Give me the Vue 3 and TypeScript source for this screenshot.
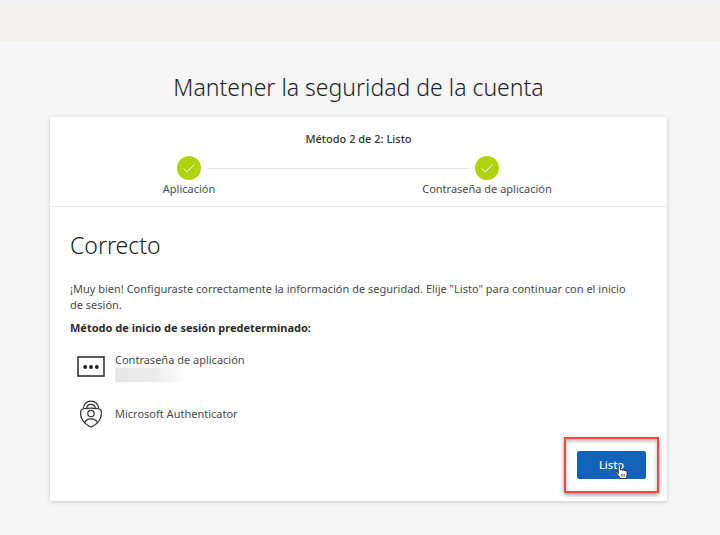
<script setup lang="ts">
interface Step {
  id: string
  label: string
}

interface Method {
  id: 'password' | 'authenticator'
  label: string
  masked: boolean
}

const steps: Step[] = [
  { id: 'app', label: 'Aplicación' },
  { id: 'app-password', label: 'Contraseña de aplicación' },
]

const methods: Method[] = [
  { id: 'password', label: 'Contraseña de aplicación', masked: true },
  { id: 'authenticator', label: 'Microsoft Authenticator', masked: false },
]
</script>

<template>
  <div class="page">
    <header class="topbar"></header>
    <main class="content">
      <h1 class="title">Mantener la seguridad de la cuenta</h1>
      <section class="card">
        <div class="progress">
          <p class="progress-title">Método 2 de 2: Listo</p>
          <ol class="steps">
            <li v-for="step in steps" :key="step.id" class="step">
              <svg class="check" viewBox="0 0 24 24" aria-hidden="true">
                <circle cx="12" cy="12" r="12" fill="#b0d40b" />
                <path d="M6.500 12.300l3.600 3.600 7.400-7.400" fill="none" stroke="#fff" stroke-width="1" />
              </svg>
              <span class="step-label">{{ step.label }}</span>
            </li>
          </ol>
        </div>
        <div class="body">
          <h2 class="heading">Correcto</h2>
          <p class="message">
            ¡Muy bien! Configuraste correctamente la información de seguridad. Elije "Listo" para continuar con el inicio de sesión.
          </p>
          <p class="default-method">Método de inicio de sesión predeterminado:</p>
          <ul class="methods">
            <li v-for="method in methods" :key="method.id" class="method">
              <svg v-if="method.id === 'password'" class="icon" viewBox="0 0 28 28" aria-hidden="true">
                <rect x="1" y="4" width="26" height="19" fill="none" stroke="#333" stroke-width="1.600" />
                <circle cx="8.200" cy="14" r="1.900" fill="#222" />
                <circle cx="14" cy="14" r="1.900" fill="#222" />
                <circle cx="19.800" cy="14" r="1.900" fill="#222" />
              </svg>
              <svg v-else class="icon" viewBox="0 0 28 28" aria-hidden="true">
                <g fill="none" stroke="#333" stroke-width="1.200">
                  <path d="M6.300 8.500C7 3.900 9.900 1.100 14 1.100s7 2.800 7.700 7.400" />
                  <path d="M9.600 8.200C9.900 5.800 11.400 4.300 14 4.300s4.100 1.500 4.400 3.900" />
                  <path d="M3.800 10.500C4.600 8.700 6.500 8.200 14 8.200s9.400.5 10.200 2.300C25.400 17.500 21.500 24 14 27 6.500 24 2.600 17.500 3.800 10.500z" />
                  <circle cx="14" cy="13.500" r="3.200" />
                  <path d="M7.300 23.100C8.200 20.400 10.700 18.800 14 18.800s5.800 1.600 6.700 4.300" />
                </g>
              </svg>
              <div class="method-text">
                <span>{{ method.label }}</span>
                <span v-if="method.masked" class="mask"></span>
              </div>
            </li>
          </ul>
          <div class="actions">
            <div class="highlight">
              <button type="button" class="done">Listo</button>
              <svg class="cursor" viewBox="0 0 14 16" aria-hidden="true">
                <path
                  d="M3.300 9.800V2.200c0-1.700 2.200-1.700 2.200 0v4c.3-.9 2-.8 2.200.3.500-.8 2-.6 2.200.5.700-.7 2.200-.3 2.200 1v3c0 1.200-1 2-1 3.500H5.200C4.800 12.800 2.900 11.600 1.300 9.300.4 7.900 2 7.200 2.800 8.100z"
                  fill="#fff" stroke="#222" stroke-width=".9" stroke-linejoin="round"
                />
                <path d="M6.300 10v2.800M8 10v2.800M9.700 10v2.800" stroke="#333" stroke-width=".7" />
              </svg>
            </div>
          </div>
        </div>
      </section>
    </main>
  </div>
</template>

<style>
body {
  background: #f6f6f6;
}
</style>

<style scoped>
.page {
  min-height: 100vh;
  background: #f6f6f6;
  color: #4a4a4a;
  font-family: "Noto Sans", "Open Sans", sans-serif;
  font-size: 11px;
  line-height: 16px;
}

h1, h2, p, ol, ul {
  margin: 0;
  padding: 0;
  font-weight: 400;
}

ol, ul {
  list-style: none;
}

.topbar {
  height: 41px;
  background: linear-gradient(#eff0f0 4px, #f1f0ee 6px);
}

.content {
  padding: 30px 53px 34px 50px;
}

.title {
  color: #222;
  font-size: 23px;
  font-weight: 350;
  line-height: 32px;
  text-align: center;
}

.card {
  margin-top: 14px;
  background: #fff;
  border-radius: 2px;
  box-shadow: 0 1px 4px rgba(0, 0, 0, 0.18);
}

.progress {
  padding: 14px 0 9px;
  border-bottom: 1px solid #ececec;
}

.progress-title {
  color: #333;
  font-weight: 500;
  text-align: center;
}

.steps {
  display: flex;
  justify-content: space-between;
  margin: 9px 168px 0 127px;
  background: linear-gradient(#e4e4e4, #e4e4e4) center 12px / calc(100% - 60px) 1px no-repeat;
}

.step {
  display: flex;
  flex-direction: column;
  align-items: center;
  width: 24px;
  gap: 1px;
  white-space: nowrap;
}

.check {
  flex: none;
  width: 24px;
  height: 24px;
}

.body {
  padding: 22px 8px 8px 20px;
}

.heading {
  color: #222;
  font-size: 23px;
  font-weight: 300;
  line-height: 32px;
}

.message {
  margin: 20px 20px 0 0;
  padding-right: 8px;
}

.default-method {
  margin-top: 7px;
  color: #2b2b2b;
  font-weight: 700;
}

.methods {
  display: flex;
  flex-direction: column;
  gap: 18px;
  margin: 16px 0 0 7px;
}

.method {
  display: flex;
  align-items: center;
  gap: 10px;
}

.icon {
  flex: none;
  width: 28px;
  height: 28px;
}

.method-text {
  display: flex;
  flex-direction: column;
}

.mask {
  width: 72px;
  height: 14px;
  background: linear-gradient(90deg, #e7e7e7, #eaeaea 50%, #fff);
}

.actions {
  display: flex;
  justify-content: flex-end;
  margin-top: 9px;
}

.highlight {
  position: relative;
  padding: 12px 11px;
  border: 2px solid #f34646;
  box-shadow: 0 2px 4px rgba(0, 0, 0, 0.4), inset 0 2px 4px rgba(0, 0, 0, 0.3);
}

.done {
  display: block;
  width: 69px;
  height: 28px;
  padding: 0;
  border: 0;
  border-radius: 2px;
  background: #1162b8;
  color: #fff;
  font: 500 11px/16px "Noto Sans", "Open Sans", sans-serif;
}

.cursor {
  position: absolute;
  left: 49px;
  top: 25px;
  width: 14px;
  height: 16px;
}
</style>
